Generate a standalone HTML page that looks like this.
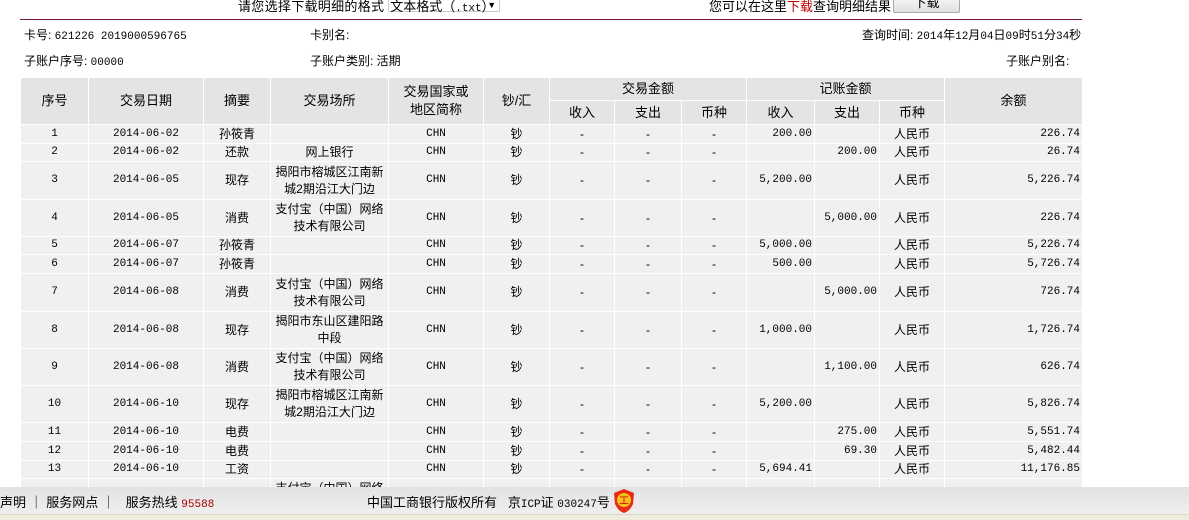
<!DOCTYPE html>
<html><head><meta charset="utf-8"><style>
*{margin:0;padding:0;box-sizing:border-box}
body{width:1189px;height:520px;overflow:hidden;background:#fff;font-family:"Liberation Sans","Noto Sans CJK SC","WenQuanYi Zen Hei",sans-serif;font-size:12px;color:#000;position:relative}
.a{position:absolute;white-space:nowrap}
.m{font-family:"Liberation Mono","Noto Sans CJK SC",monospace;font-size:11px}
table{position:absolute;left:20px;top:77px;border-collapse:collapse;table-layout:fixed;width:1062px}
td{border:1px solid #fff;background:#f0f0f0;text-align:center;line-height:17px;padding:0;overflow:hidden}
tr.h td{background:#e4e4e4;font-size:13px;line-height:18px}
td.r{text-align:right;padding-right:2px}
td.n{font-family:"Liberation Mono",monospace;font-size:11px}
.foot{position:absolute;left:0;top:487px;width:1189px;height:27px;background:linear-gradient(#e2e2e2,#efefef);font-size:13px}
.fb{position:absolute;left:0;top:514px;width:1189px;height:6px;background:#eeecdc;border-top:1px solid #d8d6c8}
</style></head><body>
<div class="a" style="left:238px;top:-4px;font-size:13px;letter-spacing:0.3px">请您选择下载明细的格式 <span style="display:inline-block;position:relative;border:1px solid #ccc;border-top:0;width:112px;height:16px;vertical-align:top;padding-left:1px;letter-spacing:0">文本格式（<span class="m">.txt</span>）<span style="position:absolute;left:98px;top:4px;font-size:9px">▼</span></span></div>
<div class="a" style="right:298px;top:-4px;font-size:13px">您可以在这里<span style="color:#b00">下载</span>查询明细结果</div>
<div class="a" style="left:893px;top:-4px;width:67px;height:17px;border:1px solid #aaa;border-top:0;border-radius:2px;background:linear-gradient(#fafafa,#e0e0e0);text-align:center;font-size:13px;line-height:14px">下载</div>
<div class="a" style="left:20px;top:19px;width:1062px;height:1px;background:#7a1a3a"></div>
<div class="a" style="left:24px;top:26px">卡号: <span class="m">621226 2019000596765</span></div>
<div class="a" style="left:310px;top:26px">卡别名:</div>
<div class="a" style="left:862px;top:26px">查询时间: <span class="m">2014</span>年<span class="m">12</span>月<span class="m">04</span>日<span class="m">09</span>时<span class="m">51</span>分<span class="m">34</span>秒</div>
<div class="a" style="left:24px;top:52px">子账户序号: <span class="m">00000</span></div>
<div class="a" style="left:310px;top:52px">子账户类别: 活期</div>
<div class="a" style="left:1006px;top:52px">子账户别名:</div>
<table>
<colgroup><col style="width:68px"><col style="width:115px"><col style="width:67px"><col style="width:118px"><col style="width:95px"><col style="width:66px"><col style="width:65px"><col style="width:67px"><col style="width:65px"><col style="width:68px"><col style="width:65px"><col style="width:65px"><col style="width:138px"></colgroup>
<tr class="h" style="height:23px"><td rowspan="2">序号</td><td rowspan="2">交易日期</td><td rowspan="2">摘要</td><td rowspan="2">交易场所</td><td rowspan="2">交易国家或<br>地区简称</td><td rowspan="2">钞/汇</td><td colspan="3">交易金额</td><td colspan="3">记账金额</td><td rowspan="2">余额</td></tr>
<tr class="h" style="height:24px"><td>收入</td><td>支出</td><td>币种</td><td>收入</td><td>支出</td><td>币种</td></tr>
<tr style="height:19px"><td class="n">1</td><td class="n">2014-06-02</td><td>孙筱青</td><td></td><td class="n">CHN</td><td>钞</td><td>-</td><td>-</td><td>-</td><td class="r n">200.00</td><td></td><td>人民币</td><td class="r n">226.74</td></tr>
<tr style="height:18px"><td class="n">2</td><td class="n">2014-06-02</td><td>还款</td><td>网上银行</td><td class="n">CHN</td><td>钞</td><td>-</td><td>-</td><td>-</td><td></td><td class="r n">200.00</td><td>人民币</td><td class="r n">26.74</td></tr>
<tr style="height:38px"><td class="n">3</td><td class="n">2014-06-05</td><td>现存</td><td>揭阳市榕城区江南新城2期沿江大门边</td><td class="n">CHN</td><td>钞</td><td>-</td><td>-</td><td>-</td><td class="r n">5,200.00</td><td></td><td>人民币</td><td class="r n">5,226.74</td></tr>
<tr style="height:37px"><td class="n">4</td><td class="n">2014-06-05</td><td>消费</td><td>支付宝（中国）网络技术有限公司</td><td class="n">CHN</td><td>钞</td><td>-</td><td>-</td><td>-</td><td></td><td class="r n">5,000.00</td><td>人民币</td><td class="r n">226.74</td></tr>
<tr style="height:18px"><td class="n">5</td><td class="n">2014-06-07</td><td>孙筱青</td><td></td><td class="n">CHN</td><td>钞</td><td>-</td><td>-</td><td>-</td><td class="r n">5,000.00</td><td></td><td>人民币</td><td class="r n">5,226.74</td></tr>
<tr style="height:19px"><td class="n">6</td><td class="n">2014-06-07</td><td>孙筱青</td><td></td><td class="n">CHN</td><td>钞</td><td>-</td><td>-</td><td>-</td><td class="r n">500.00</td><td></td><td>人民币</td><td class="r n">5,726.74</td></tr>
<tr style="height:38px"><td class="n">7</td><td class="n">2014-06-08</td><td>消费</td><td>支付宝（中国）网络技术有限公司</td><td class="n">CHN</td><td>钞</td><td>-</td><td>-</td><td>-</td><td></td><td class="r n">5,000.00</td><td>人民币</td><td class="r n">726.74</td></tr>
<tr style="height:37px"><td class="n">8</td><td class="n">2014-06-08</td><td>现存</td><td>揭阳市东山区建阳路中段</td><td class="n">CHN</td><td>钞</td><td>-</td><td>-</td><td>-</td><td class="r n">1,000.00</td><td></td><td>人民币</td><td class="r n">1,726.74</td></tr>
<tr style="height:37px"><td class="n">9</td><td class="n">2014-06-08</td><td>消费</td><td>支付宝（中国）网络技术有限公司</td><td class="n">CHN</td><td>钞</td><td>-</td><td>-</td><td>-</td><td></td><td class="r n">1,100.00</td><td>人民币</td><td class="r n">626.74</td></tr>
<tr style="height:37px"><td class="n">10</td><td class="n">2014-06-10</td><td>现存</td><td>揭阳市榕城区江南新城2期沿江大门边</td><td class="n">CHN</td><td>钞</td><td>-</td><td>-</td><td>-</td><td class="r n">5,200.00</td><td></td><td>人民币</td><td class="r n">5,826.74</td></tr>
<tr style="height:19px"><td class="n">11</td><td class="n">2014-06-10</td><td>电费</td><td></td><td class="n">CHN</td><td>钞</td><td>-</td><td>-</td><td>-</td><td></td><td class="r n">275.00</td><td>人民币</td><td class="r n">5,551.74</td></tr>
<tr style="height:19px"><td class="n">12</td><td class="n">2014-06-10</td><td>电费</td><td></td><td class="n">CHN</td><td>钞</td><td>-</td><td>-</td><td>-</td><td></td><td class="r n">69.30</td><td>人民币</td><td class="r n">5,482.44</td></tr>
<tr style="height:18px"><td class="n">13</td><td class="n">2014-06-10</td><td>工资</td><td></td><td class="n">CHN</td><td>钞</td><td>-</td><td>-</td><td>-</td><td class="r n">5,694.41</td><td></td><td>人民币</td><td class="r n">11,176.85</td></tr>
<tr style="height:37px"><td></td><td></td><td></td><td>支付宝（中国）网络技术有限公司</td><td></td><td></td><td></td><td></td><td></td><td></td><td></td><td></td><td></td></tr>
</table>
<div class="foot">
<div class="a" style="left:0;top:5px">声明 ｜ 服务网点 ｜&nbsp;&nbsp; 服务热线 <span class="m" style="color:#a00">95588</span></div>
<div class="a" style="left:367px;top:5px">中国工商银行版权所有&nbsp;&nbsp; 京<span class="m">ICP</span>证 <span class="m">030247</span>号</div>
<svg class="a" style="left:612px;top:1px" width="24" height="26" viewBox="0 0 24 26"><path d="M12 1 L22 5 L21 16 Q18 23 12 25 Q6 23 3 16 L2 5 Z" fill="#e82a10"/><circle cx="12" cy="12" r="7" fill="#f7c020"/><text x="12" y="16" font-size="10" text-anchor="middle" fill="#c00">工</text></svg>
</div>
<div class="fb"></div>
</body></html>
